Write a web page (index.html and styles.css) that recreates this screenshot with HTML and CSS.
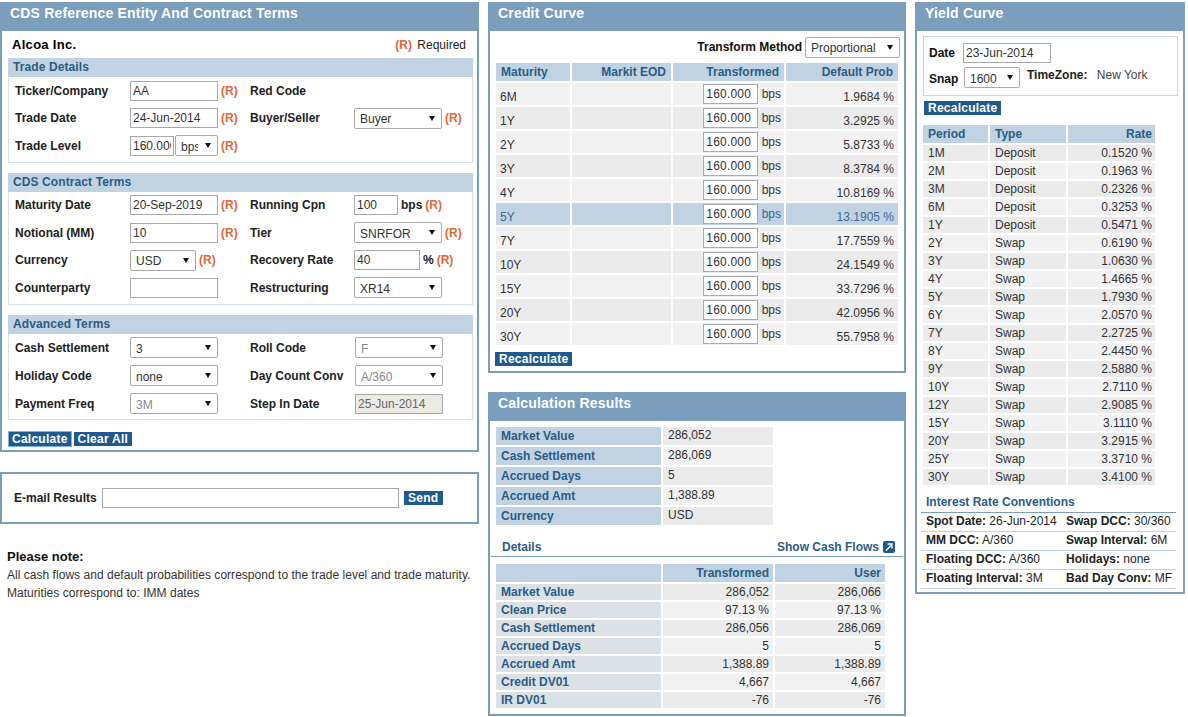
FILE: index.html
```html
<!DOCTYPE html>
<html lang="en">
    <head>
        <meta charset="UTF-8">
        <title>CDS Calculator</title>
        <link rel="stylesheet" href="styles.css">
    </head>
    <body>
        <div class="page">
            <div class="column col-left">
                <div class="panel panel-terms">
                    <h2 class="panel-title">CDS Reference Entity And Contract Terms</h2>
                    <div class="entity-row">
                        <span class="entity-name">Alcoa Inc.</span>
                        <span class="required"><span class="req">(R)</span> Required</span>
                    </div>
                    <div class="section">
                        <h3 class="section-title">Trade Details</h3>
                        <div class="field-grid">
                            <label>Ticker/Company</label>
                            <div class="cell"><input class="w88" type="text" value="AA"><span class="req">(R)</span></div>
                            <label>Red Code</label>
                            <div class="cell"></div>
                            <label>Trade Date</label>
                            <div class="cell"><input class="w88" type="text" value="24-Jun-2014"><span class="req">(R)</span></div>
                            <label>Buyer/Seller</label>
                            <div class="cell"><select class="w88"><option>Buyer</option></select><span class="req">(R)</span></div>
                            <label>Trade Level</label>
                            <div class="cell"><input class="w44" type="text" value="160.000"><select class="w43 joined"><option>bps</option></select><span class="req">(R)</span></div>
                            <div></div>
                            <div class="cell"></div>
                        </div>
                    </div>
                    <div class="section">
                        <h3 class="section-title">CDS Contract Terms</h3>
                        <div class="field-grid">
                            <label>Maturity Date</label>
                            <div class="cell"><input class="w88" type="text" value="20-Sep-2019"><span class="req">(R)</span></div>
                            <label>Running Cpn</label>
                            <div class="cell"><input class="w44" type="text" value="100"><b class="unit">bps</b><span class="req">(R)</span></div>
                            <label>Notional (MM)</label>
                            <div class="cell"><input class="w88" type="text" value="10"><span class="req">(R)</span></div>
                            <label>Tier</label>
                            <div class="cell"><select class="w88"><option>SNRFOR</option></select><span class="req">(R)</span></div>
                            <label>Currency</label>
                            <div class="cell"><select class="w66"><option>USD</option></select><span class="req">(R)</span></div>
                            <label>Recovery Rate</label>
                            <div class="cell"><input class="w66" type="text" value="40"><b class="unit">%</b><span class="req">(R)</span></div>
                            <label>Counterparty</label>
                            <div class="cell"><input class="w88" type="text"></div>
                            <label>Restructuring</label>
                            <div class="cell"><select class="w88"><option>XR14</option></select></div>
                        </div>
                    </div>
                    <div class="section">
                        <h3 class="section-title">Advanced Terms</h3>
                        <div class="field-grid field-grid-adv">
                            <label>Cash Settlement</label>
                            <div class="cell"><select class="w88"><option>3</option></select></div>
                            <label>Roll Code</label>
                            <div class="cell nudge"><select class="w88 dim"><option>F</option></select></div>
                            <label>Holiday Code</label>
                            <div class="cell"><select class="w88"><option>none</option></select></div>
                            <label>Day Count Conv</label>
                            <div class="cell nudge"><select class="w88 dim"><option>A/360</option></select></div>
                            <label>Payment Freq</label>
                            <div class="cell"><select class="w88 dim"><option>3M</option></select></div>
                            <label>Step In Date</label>
                            <div class="cell nudge"><input class="w88 locked" type="text" value="25-Jun-2014"></div>
                        </div>
                    </div>
                    <div class="button-row">
                        <button class="btn btn-focus" type="button">Calculate</button>
                        <button class="btn" type="button">Clear All</button>
                    </div>
                </div>
                <div class="panel panel-email">
                    <label>E-mail Results</label>
                    <input class="email-input" type="text">
                    <button class="btn btn-send" type="button">Send</button>
                </div>
                <div class="note">
                    <h4>Please note:</h4>
                    <p>All cash flows and default probabilities correspond to the trade level and trade maturity.</p>
                    <p>Maturities correspond to: IMM dates</p>
                </div>
            </div>

            <div class="column col-mid">
                <div class="panel panel-credit">
                    <h2 class="panel-title">Credit Curve</h2>
                    <div class="transform-row">
                        <label>Transform Method</label>
                        <select class="w95"><option>Proportional</option></select>
                    </div>
                    <table class="grid credit-table">
                        <colgroup><col class="c74"><col class="c99"><col class="c111"><col class="c112"></colgroup>
                        <thead>
                            <tr><th>Maturity</th><th class="num">Markit EOD</th><th class="num">Transformed</th><th class="num">Default Prob</th></tr>
                        </thead>
                        <tbody>
                            <tr><td>6M</td><td></td><td class="spread"><input type="text" value="160.000"> bps</td><td class="num">1.9684 %</td></tr>
                            <tr><td>1Y</td><td></td><td class="spread"><input type="text" value="160.000"> bps</td><td class="num">3.2925 %</td></tr>
                            <tr><td>2Y</td><td></td><td class="spread"><input type="text" value="160.000"> bps</td><td class="num">5.8733 %</td></tr>
                            <tr><td>3Y</td><td></td><td class="spread"><input type="text" value="160.000"> bps</td><td class="num">8.3784 %</td></tr>
                            <tr><td>4Y</td><td></td><td class="spread"><input type="text" value="160.000"> bps</td><td class="num">10.8169 %</td></tr>
                            <tr class="active"><td>5Y</td><td></td><td class="spread"><input type="text" value="160.000"> bps</td><td class="num">13.1905 %</td></tr>
                            <tr><td>7Y</td><td></td><td class="spread"><input type="text" value="160.000"> bps</td><td class="num">17.7559 %</td></tr>
                            <tr><td>10Y</td><td></td><td class="spread"><input type="text" value="160.000"> bps</td><td class="num">24.1549 %</td></tr>
                            <tr><td>15Y</td><td></td><td class="spread"><input type="text" value="160.000"> bps</td><td class="num">33.7296 %</td></tr>
                            <tr><td>20Y</td><td></td><td class="spread"><input type="text" value="160.000"> bps</td><td class="num">42.0956 %</td></tr>
                            <tr><td>30Y</td><td></td><td class="spread"><input type="text" value="160.000"> bps</td><td class="num">55.7958 %</td></tr>
                        </tbody>
                    </table>
                    <div class="recalc-credit">
                        <button class="btn" type="button">Recalculate</button>
                    </div>
                </div>
                <div class="panel panel-results">
                    <h2 class="panel-title">Calculation Results</h2>
                    <table class="grid summary-table">
                        <colgroup><col class="c165"><col class="c110"></colgroup>
                        <tr><th>Market Value</th><td>286,052</td></tr>
                        <tr><th>Cash Settlement</th><td>286,069</td></tr>
                        <tr><th>Accrued Days</th><td>5</td></tr>
                        <tr><th>Accrued Amt</th><td>1,388.89</td></tr>
                        <tr><th>Currency</th><td>USD</td></tr>
                    </table>
                    <div class="details-row">
                        <span>Details</span>
                        <a class="flows-link">Show Cash Flows
                            <svg width="12" height="12" viewBox="0 0 12 12"><rect width="12" height="12" rx="2" fill="#1f5a8c"/><path d="M3 9.5 8.5 4M4.5 3H9v4.5" fill="none" stroke="#fff" stroke-width="1.4"/></svg>
                        </a>
                    </div>
                    <table class="grid details-table">
                        <colgroup><col class="c165"><col class="c110"><col class="c110"></colgroup>
                        <thead>
                            <tr><th></th><th class="num">Transformed</th><th class="num">User</th></tr>
                        </thead>
                        <tbody>
                            <tr><th>Market Value</th><td class="num">286,052</td><td class="num">286,066</td></tr>
                            <tr><th>Clean Price</th><td class="num">97.13 %</td><td class="num">97.13 %</td></tr>
                            <tr><th>Cash Settlement</th><td class="num">286,056</td><td class="num">286,069</td></tr>
                            <tr><th>Accrued Days</th><td class="num">5</td><td class="num">5</td></tr>
                            <tr><th>Accrued Amt</th><td class="num">1,388.89</td><td class="num">1,388.89</td></tr>
                            <tr><th>Credit DV01</th><td class="num">4,667</td><td class="num">4,667</td></tr>
                            <tr><th>IR DV01</th><td class="num">-76</td><td class="num">-76</td></tr>
                        </tbody>
                    </table>
                </div>
            </div>

            <div class="column col-right">
                <div class="panel panel-yield">
                    <h2 class="panel-title">Yield Curve</h2>
                    <div class="snap-box">
                        <div class="snap-row">
                            <label>Date</label>
                            <input class="w88" type="text" value="23-Jun-2014">
                        </div>
                        <div class="snap-row snap-second">
                            <label>Snap</label>
                            <select class="w56"><option>1600</option></select>
                            <span class="timezone"><b>TimeZone:</b> New York</span>
                        </div>
                    </div>
                    <div class="recalc-yield">
                        <button class="btn" type="button">Recalculate</button>
                    </div>
                    <table class="grid yield-table">
                        <colgroup><col class="c65"><col class="c76"><col class="c87"></colgroup>
                        <thead>
                            <tr><th>Period</th><th>Type</th><th class="num">Rate</th></tr>
                        </thead>
                        <tbody>
                            <tr><td>1M</td><td>Deposit</td><td class="num">0.1520 %</td></tr>
                            <tr><td>2M</td><td>Deposit</td><td class="num">0.1963 %</td></tr>
                            <tr><td>3M</td><td>Deposit</td><td class="num">0.2326 %</td></tr>
                            <tr><td>6M</td><td>Deposit</td><td class="num">0.3253 %</td></tr>
                            <tr><td>1Y</td><td>Deposit</td><td class="num">0.5471 %</td></tr>
                            <tr><td>2Y</td><td>Swap</td><td class="num">0.6190 %</td></tr>
                            <tr><td>3Y</td><td>Swap</td><td class="num">1.0630 %</td></tr>
                            <tr><td>4Y</td><td>Swap</td><td class="num">1.4665 %</td></tr>
                            <tr><td>5Y</td><td>Swap</td><td class="num">1.7930 %</td></tr>
                            <tr><td>6Y</td><td>Swap</td><td class="num">2.0570 %</td></tr>
                            <tr><td>7Y</td><td>Swap</td><td class="num">2.2725 %</td></tr>
                            <tr><td>8Y</td><td>Swap</td><td class="num">2.4450 %</td></tr>
                            <tr><td>9Y</td><td>Swap</td><td class="num">2.5880 %</td></tr>
                            <tr><td>10Y</td><td>Swap</td><td class="num">2.7110 %</td></tr>
                            <tr><td>12Y</td><td>Swap</td><td class="num">2.9085 %</td></tr>
                            <tr><td>15Y</td><td>Swap</td><td class="num">3.1110 %</td></tr>
                            <tr><td>20Y</td><td>Swap</td><td class="num">3.2915 %</td></tr>
                            <tr><td>25Y</td><td>Swap</td><td class="num">3.3710 %</td></tr>
                            <tr><td>30Y</td><td>Swap</td><td class="num">3.4100 %</td></tr>
                        </tbody>
                    </table>
                    <h3 class="conv-title">Interest Rate Conventions</h3>
                    <div class="conv-list">
                        <div class="conv-row"><span><b>Spot Date:</b> 26-Jun-2014</span><span><b>Swap DCC:</b> 30/360</span></div>
                        <div class="conv-row"><span><b>MM DCC:</b> A/360</span><span><b>Swap Interval:</b> 6M</span></div>
                        <div class="conv-row"><span><b>Floating DCC:</b> A/360</span><span><b>Holidays:</b> none</span></div>
                        <div class="conv-row"><span><b>Floating Interval:</b> 3M</span><span><b>Bad Day Conv:</b> MF</span></div>
                    </div>
                </div>
            </div>
        </div>
    </body>
</html>
```

FILE: styles.css
```css
* {
    box-sizing: border-box;
}
body {
    margin: 0;
    background-color: #fff;
    color: #222;
    font-family: "Liberation Sans", Arial, sans-serif;
    font-size: 12px;
}
h2, h3, h4, p {
    margin: 0;
}
.page {
    display: flex;
    align-items: flex-start;
    gap: 9px;
    padding-top: 2px;
}
.column {
    display: flex;
    flex-direction: column;
}
.col-left {
    width: 479px;
}
.col-mid {
    width: 418px;
    gap: 19px;
}
.col-right {
    width: 270px;
}

/* panels */
.panel {
    border: 2px solid #7b9ebd;
    border-top: 0;
    background-color: #fff;
}
.panel-title {
    height: 29px;
    margin: 0 -2px;
    padding: 3px 0 0 10px;
    background-color: #7b9ebd;
    color: #fff;
    font-size: 14px;
    letter-spacing: 0.18px;
    line-height: 17px;
}
.panel-terms {
    height: 450px;
    padding: 0 4px;
    margin-bottom: 20px;
}
.panel-terms .panel-title {
    margin: 0 -6px;
}
.panel-email {
    display: flex;
    align-items: center;
    height: 52px;
    padding: 0 0 0 12px;
    border-top: 2px solid #7b9ebd;
    margin-bottom: 25px;
}
.panel-email label {
    font-weight: bold;
}
.email-input {
    width: 297px;
    height: 20px;
    margin: 0 5px 0 5px;
}
.panel-credit {
    height: 371px;
}
.panel-results {
    height: 324px;
}
.panel-yield {
    height: 592px;
}

/* form bits */
input, select {
    height: 20px;
    padding: 0 2px;
    border: 1px solid #a9a9a9;
    background-color: #fff;
    color: #333;
    font-family: inherit;
    font-size: 12px;
}
select {
    height: 21px;
    padding: 2px 14px 0 5px;
    border-radius: 2px;
    appearance: none;
    background-image: url("data:image/svg+xml,%3Csvg xmlns='http://www.w3.org/2000/svg' width='6' height='5'%3E%3Cpath d='M0 0h6L3 5z' fill='%23111'/%3E%3C/svg%3E");
    background-repeat: no-repeat;
    background-position: right 6px center;
}
.w43 { width: 43px; padding-right: 19px; }
.w44 { width: 44px; }
.w56 { width: 56px; }
.w66 { width: 66px; }
.w88 { width: 88px; }
.w95 { width: 95px; }
.joined {
    margin-left: 1px;
}
.dim {
    color: #888;
}
.locked {
    background-color: #ebebe4;
    color: #666;
}
.req {
    margin-left: 3px;
    color: #e0683a;
    font-weight: bold;
}
.unit {
    margin-left: 3px;
}

.entity-row {
    display: flex;
    justify-content: space-between;
    align-items: center;
    height: 27px;
    padding: 0 7px 0 6px;
}
.entity-name {
    color: #000;
    font-size: 13px;
    font-weight: bold;
    letter-spacing: 0.3px;
}
.required .req {
    margin-right: 2px;
}
.section {
    margin: 0 0 10px 2px;
    width: 465px;
    border: 1px solid #d5dfe8;
    border-top: 0;
}
.section-title {
    height: 19px;
    margin: 0 -1px;
    padding-left: 5px;
    background-color: #c1d3e2;
    color: #2b5c85;
    font-size: 12px;
    letter-spacing: 0.1px;
    line-height: 19px;
}
.field-grid {
    display: grid;
    grid-template-columns: 115px 120px 104px 1fr;
    grid-auto-rows: 27.5px;
    padding: 0 0 2px 6px;
    align-items: center;
}
.field-grid-adv {
    grid-auto-rows: 28px;
    padding-bottom: 1px;
}
.field-grid label {
    font-weight: bold;
}
.cell {
    display: flex;
    align-items: center;
}
.nudge {
    padding-left: 1px;
}
.button-row {
    display: flex;
    gap: 3px;
    padding: 2px 0 0 3px;
}

/* buttons */
.btn {
    height: 14px;
    padding: 0 4px;
    border: 0;
    background-color: #1f5a8c;
    color: #fff;
    font-family: inherit;
    font-size: 12px;
    font-weight: bold;
    letter-spacing: 0.25px;
    line-height: 14px;
}
.btn-focus {
    padding: 0 3px;
    outline: 1px solid #7fb0e0;
}
.btn-send {
    width: 39px;
}

/* note */
.note {
    padding-left: 7px;
}
.note h4 {
    margin-bottom: 1px;
    color: #111;
    font-size: 13px;
    line-height: 16px;
}
.note p {
    line-height: 18px;
    color: #333;
    letter-spacing: 0.03px;
}

/* tables */
.grid {
    border-collapse: separate;
    border-spacing: 2px;
    table-layout: fixed;
}
.c65 { width: 65px; }
.c74 { width: 74px; }
.c76 { width: 76px; }
.c87 { width: 87px; }
.c99 { width: 99px; }
.c110 { width: 110px; }
.c111 { width: 111px; }
.c112 { width: 112px; }
.c165 { width: 165px; }
.grid th, .grid td {
    padding: 0 4px 0 5px;
    overflow: hidden;
    white-space: nowrap;
    text-align: left;
}
.grid th {
    height: 18px;
    background-color: #c1d3e2;
    color: #2b5c85;
    font-weight: bold;
}
.grid td {
    color: #333;
}
.grid .num {
    text-align: right;
}
.grid tbody tr:nth-child(odd) td {
    background-color: #ebebeb;
}
.grid tbody tr:nth-child(even) td {
    background-color: #f2f2f2;
}

.transform-row {
    display: flex;
    justify-content: flex-end;
    align-items: center;
    gap: 3px;
    height: 30px;
    padding: 2px 4px 0 0;
}
.transform-row label {
    color: #111;
    font-weight: bold;
}
.credit-table {
    width: 404px;
    margin-left: 4px;
}
.credit-table thead th.num {
    padding-right: 5px;
}
.credit-table td {
    height: 22px;
    padding-top: 5px;
    padding-left: 4px;
}
.credit-table tbody tr:nth-child(odd) td {
    background-color: #f2f2f2;
}
.credit-table tbody tr:nth-child(even) td {
    background-color: #ebebeb;
}
.credit-table tbody tr.active td {
    background-color: #c1d3e2;
    color: #3a6a9a;
}
.credit-table td.spread {
    padding-top: 0;
    padding-right: 3px;
    text-align: right;
}
.spread input {
    width: 55px;
    height: 20px;
    font-size: 12px;
    letter-spacing: 0.2px;
}
.recalc-credit {
    padding: 5px 0 0 5px;
}
.summary-table {
    margin: 4px 0 0 4px;
}
.summary-table td {
    padding: 0 4px 2px 5px;
    height: 18px;
    background-color: #f2f2f2;
}
.details-row {
    display: flex;
    justify-content: space-between;
    align-items: center;
    height: 22px;
    margin: 8px 1px 0;
    padding: 2px 8px 0 11px;
    border-bottom: 1px solid #7b9ebd;
    color: #2b5c85;
    font-weight: bold;
}
.flows-link {
    display: flex;
    align-items: center;
    gap: 4px;
}
.details-table {
    margin: 5px 0 0 4px;
}
.details-table td, .details-table tbody th {
    height: 16px;
    line-height: 14px;
}
.details-table tbody th {
    background-color: #dce1e6;
}
.yield-table {
    margin: 8px 0 0 4px;
}
.yield-table td {
    height: 16px;
    line-height: 14px;
}
.yield-table th.num, .yield-table td.num {
    padding-right: 3px;
}

/* yield curve */
.snap-box {
    width: 255px;
    height: 60px;
    margin: 5px 0 0 6px;
    padding: 5px 0 0 5px;
    border: 1px solid #c9d6e2;
}
.snap-row {
    display: flex;
    align-items: center;
    height: 21px;
}
.snap-row label {
    width: 34px;
    color: #111;
    font-weight: bold;
}
.snap-second {
    margin-top: 4px;
}
.snap-second label {
    width: 35px;
    margin-top: 2px;
}
.timezone {
    margin: -6px 0 0 7px;
    color: #444;
}
.timezone b {
    margin-right: 6px;
    color: #222;
}
.recalc-yield {
    padding: 5px 0 0 7px;
}
.conv-title {
    margin: 6px 0 0 9px;
    color: #2b5c85;
    font-size: 12px;
    line-height: 18px;
}
.conv-list {
    margin: 1px 0 0 4px;
    width: 255px;
    border-top: 1px solid #7b9ebd;
}
.conv-row {
    display: grid;
    grid-template-columns: 140px 1fr;
    height: 19px;
    padding-left: 5px;
    border-bottom: 1px solid #c1d3e2;
    line-height: 17px;
    white-space: nowrap;
}
.conv-row b {
    color: #222;
}
```
